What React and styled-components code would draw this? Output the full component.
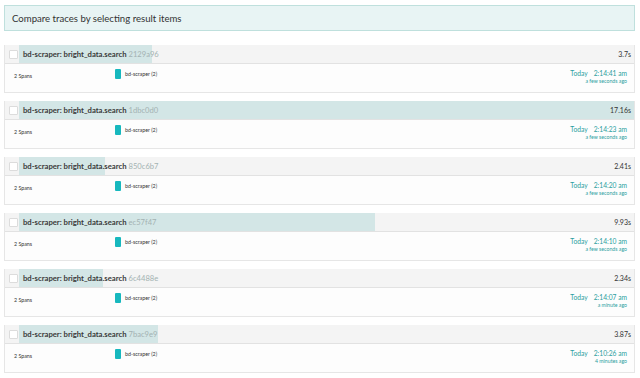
import React from "react";
import styled, { createGlobalStyle } from "styled-components";

const Global = createGlobalStyle`
  html, body { margin: 0; padding: 0; background: #fff; }
  body { font-family: Lato, "Open Sans", "Liberation Sans", sans-serif; color: #333; }
  * { box-sizing: border-box; }
`;

const Page = styled.div`
  width: 640px;
  padding: 5px 5px 0 4px;
  display: flex;
  flex-direction: column;
`;

const Banner = styled.div`
  height: 26px;
  border: 1px solid #bfe0dd;
  background: #e8f4f4;
  display: flex;
  align-items: center;
  padding-left: 7px;
  font-size: 9.6px;
  color: #333;
  margin-bottom: 14px;
`;

const List = styled.div`
  display: flex;
  flex-direction: column;
  gap: 8px;
`;

const Card = styled.div`
  border: 1px solid #e6e6e6;
  border-top: none;
  display: flex;
  flex-direction: column;
`;

const TitleBar = styled.div`
  height: 19px;
  background: #f4f4f4;
  border-bottom: 1px solid #e2e2e2;
  display: flex;
  align-items: center;
`;

const CheckCell = styled.div`
  width: 14px;
  flex: none;
  display: flex;
  align-items: center;
  justify-content: flex-end;
  padding-right: 1px;
`;

const Check = styled.span`
  width: 9px;
  height: 9px;
  background: #fff;
  border: 1px solid #dcdcdc;
  border-radius: 1px;
`;

const BarArea = styled.div`
  position: relative;
  flex: 1;
  height: 100%;
  display: flex;
  align-items: center;
  padding-left: 4px;
  padding-right: 3px;
`;

const DurationBar = styled.div`
  position: absolute;
  left: 0;
  top: 0;
  bottom: 0;
  background: #d3e6e6;
`;

const Name = styled.span`
  position: relative;
  font-size: 7.7px;
  font-weight: 700;
  color: #3a3a3a;
`;

const TraceId = styled.span`
  position: relative;
  font-size: 7.6px;
  color: #a3b2b2;
  margin-left: 2px;
`;

const Duration = styled.span`
  position: relative;
  margin-left: auto;
  font-size: 7px;
  color: #333;
`;

const Body = styled.div`
  height: 28px;
  background: #fdfdfd;
  display: flex;
  align-items: flex-start;
  padding: 0 7px 0 9px;
`;

const Spans = styled.div`
  width: 101px;
  font-size: 5.3px;
  color: #333;
  padding-top: 9px;
`;

const Service = styled.div`
  display: flex;
  align-items: center;
  gap: 4px;
  padding-top: 5px;
  font-size: 5.3px;
  color: #333;
`;

const Swatch = styled.span`
  width: 6px;
  height: 10px;
  background: #17b8be;
  border-radius: 1px;
`;

const When = styled.div`
  margin-left: auto;
  display: flex;
  flex-direction: column;
  align-items: flex-end;
  padding-top: 5px;
  color: #2a9d9d;
`;

const WhenLine = styled.div`
  display: flex;
  gap: 6px;
  font-size: 6.7px;
`;

const Ago = styled.div`
  font-size: 5.2px;
  margin-top: 1px;
`;

const traces = [
  { id: "2129a96", dur: 3.7, durText: "3.7s", time: "2:14:41 am", ago: "a few seconds ago" },
  { id: "1dbc0d0", dur: 17.16, durText: "17.16s", time: "2:14:23 am", ago: "a few seconds ago" },
  { id: "850c6b7", dur: 2.41, durText: "2.41s", time: "2:14:20 am", ago: "a few seconds ago" },
  { id: "ec57f47", dur: 9.93, durText: "9.93s", time: "2:14:10 am", ago: "a few seconds ago" },
  { id: "6c4488e", dur: 2.34, durText: "2.34s", time: "2:14:07 am", ago: "a minute ago" },
  { id: "7bac9e9", dur: 3.87, durText: "3.87s", time: "2:10:26 am", ago: "4 minutes ago" },
];

const MAX = 17.16;

export default function App() {
  return (
    <>
      <Global />
      <Page>
        <Banner>Compare traces by selecting result items</Banner>
        <List>
          {traces.map((t) => (
            <Card key={t.id}>
              <TitleBar>
                <CheckCell>
                  <Check />
                </CheckCell>
                <BarArea>
                  <DurationBar style={{ width: `${(t.dur / MAX) * 100}%` }} />
                  <Name>bd-scraper: bright_data.search</Name>
                  <TraceId>{t.id}</TraceId>
                  <Duration>{t.durText}</Duration>
                </BarArea>
              </TitleBar>
              <Body>
                <Spans>2 Spans</Spans>
                <Service>
                  <Swatch />
                  bd-scraper (2)
                </Service>
                <When>
                  <WhenLine>
                    <span>Today</span>
                    <span>{t.time}</span>
                  </WhenLine>
                  <Ago>{t.ago}</Ago>
                </When>
              </Body>
            </Card>
          ))}
        </List>
      </Page>
    </>
  );
}
